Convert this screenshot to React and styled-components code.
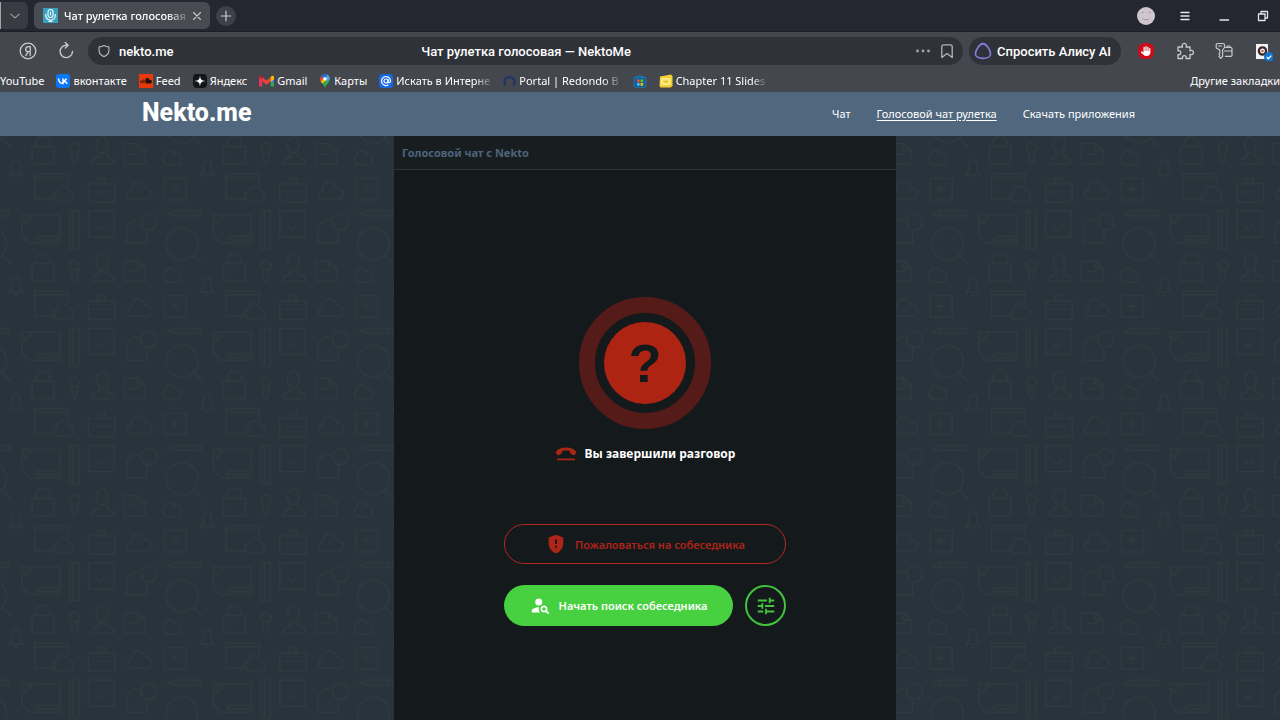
import React, { useState } from "react";
import styled, { createGlobalStyle, css } from "styled-components";
import { FaSoundcloud, FaHand } from "react-icons/fa6";
import { MdGppMaybe, MdPersonSearch, MdTune } from "react-icons/md";

const GlobalStyle = createGlobalStyle`
  * {
    box-sizing: border-box;
  }

  body {
    margin: 0;
    background: #29333b;
    color: #fff;
    font-family: "Noto Sans", "Open Sans", sans-serif;
    overflow-x: hidden;
  }

  button, input {
    font-family: inherit;
    color: inherit;
    padding: 0;
    border: none;
    background: none;
  }

  a {
    color: inherit;
    text-decoration: none;
  }

  svg {
    display: block;
    flex-shrink: 0;
  }
`;

/* ---------- browser icons ---------- */

const Line = ({ size = 20, children, width = 1.4, color = "#c9cacf" }) => (
  <svg width={size} height={size} viewBox="0 0 20 20" fill="none" stroke={color}
    strokeWidth={width} strokeLinecap="round" strokeLinejoin="round">
    {children}
  </svg>
);

const YandexIcon = () => (
  <Line width={1.3}>
    <circle cx="10" cy="10" r="7.8" />
    <path d="M12.2 14.6V5.6h-1.5c-1.9 0-3 1-3 2.6 0 1.5 1 2.5 2.6 2.5h1.9M10 10.8l-2.2 3.8" />
  </Line>
);

const ReloadIcon = () => (
  <Line>
    <path d="M10.5 4.2A6.2 6.2 0 1 0 16.5 10.5M9.3 1.5l2.8 2.7-2.8 2.8" />
  </Line>
);

const ShieldIcon = () => (
  <Line size={14} width={1.7} color="#b5b6bc">
    <path d="M10 2.2c2.3 1.5 4.6 2 7 2v5c0 4.2-2.6 7-7 8.800-4.400-1.800-7-4.600-7-8.800v-5c2.400 0 4.700-.5 7-2z" />
  </Line>
);

const BookmarkIcon = () => (
  <Line size={16} width={1.6} color="#b5b6bc">
    <path d="M3.5 18V4.5a2.2 2.2 0 0 1 2.2-2.2h8.600a2.200 2.200 0 0 1 2.200 2.200V18L10 13z" />
  </Line>
);

const AliceIcon = () => (
  <Line size={18} width={1.7} color="#8b7be0">
    <path d="M10 1.800c4 0 8.400 7.700 8.400 11.400 0 3-3.600 5-8.400 5s-8.400-2-8.400-5C1.600 9.500 6 1.800 10 1.800z" />
  </Line>
);

const PuzzleIcon = () => (
  <Line width={1.3}>
    <path d="M3 6h4.600c-.9-1.700-.2-3.700 1.700-3.700S11.900 4.300 11 6h4v3.800c1.700-.8 3.500-.1 3.500 1.700s-1.800 2.600-3.500 1.700V17.500h-4c.6-1.600-.2-2.900-1.700-2.900s-2.300 1.300-1.700 2.900H3v-3.900c1.700.5 2.800-.4 2.800-1.900S4.700 9.300 3 9.900z" />
  </Line>
);

const KeysIcon = () => (
  <Line width={1.2}>
    <path d="M3.500 2.500h5.400a1.600 1.600 0 0 1 1.600 1.600v2.400L8.600 9v6.300l-1.900 2-1.600-1.700.7-1.300-.8-1.300.8-1.200V9L2.200 7V4.100c0-.9.4-1.600 1.300-1.600zM4.600 5h3" />
    <path d="M11.500 6.500h5.500a1 1 0 0 1 1 1v6.800a1 1 0 0 1-1 1h-5.600M10.500 10H18M13 6.500V5h3v1.500" />
  </Line>
);

const ScreenIcon = () => (
  <svg width="20" height="20" viewBox="0 0 20 20">
    <path d="M3 3h12v15H3z" fill="#f3f3f3" />
    <circle cx="9.500" cy="10" r="3.600" fill="#fff" stroke="#3b2b31" strokeWidth="2.400" />
    <circle cx="9.500" cy="10" r="1.200" fill="#c2502b" />
    <circle cx="16" cy="16" r="5" fill="#1274d1" />
    <path d="M13.700 16l1.700 1.700 2.900-3.100" fill="none" stroke="#fff" strokeWidth="1.300" />
  </svg>
);

const AvatarFace = () => (
  <svg width="20" height="20" viewBox="0 0 20 20">
    <circle cx="10" cy="10" r="9" fill="#cfc6cf" />
    <path d="M5.500 7l2-1M12.500 6l2 1" stroke="#b592a5" strokeWidth="1.200" />
    <path d="M6 11.500c2 2.500 6 2.500 8 0-1 3.500-7 3.500-8 0z" fill="#8793a0" />
  </svg>
);

const MicIcon = () => (
  <svg width="15" height="15" viewBox="0 0 15 15">
    <path d="M0 0h15v15H0z" fill="#3a9fbd" />
    <rect x="5" y="1.500" width="5" height="8" rx="2.500" fill="none" stroke="#e8f8fb" strokeWidth="1.200" />
    <path d="M2.800 6v1.400a4.700 4.700 0 0 0 9.400 0V6M7.500 12v2M5.500 13.500h4M7.500 3.500v4" fill="none" stroke="#e8f8fb" strokeWidth="1.200" />
  </svg>
);

/* ---------- bookmark icons ---------- */

const VkIcon = () => (
  <svg width="14" height="14" viewBox="0 0 14 14">
    <rect width="14" height="14" rx="3" fill="#0b77f5" />
    <path d="M2.500 4.500c.3 3.200 1.800 5 4.500 5v-5M7 7c1.800-.2 3-1 3.500-2.500M7 7c2.200.2 3.500 1 4.300 2.600" fill="none" stroke="#fff" strokeWidth="1.500" />
  </svg>
);

const StarIcon = () => (
  <svg width="14" height="14" viewBox="0 0 14 14">
    <rect width="14" height="14" rx="4" fill="#15161a" />
    <path d="M7 1.500c.4 4 1.500 5.100 5.500 5.500-4 .4-5.100 1.500-5.500 5.500C6.600 8.500 5.500 7.400 1.500 7c4-.4 5.100-1.500 5.500-5.500z" fill="#fff" />
  </svg>
);

const GmailIcon = () => (
  <svg width="15" height="14" viewBox="0 0 15 14">
    <path d="M15 4v7.500c0 .6-.4 1-1 1h-2.300V5.500z" fill="#34a853" />
    <path d="M0 2.800v2.700l3.300 2.300V3.600L2.400 2C1.300 1.200 0 1.700 0 2.800z" fill="#c5221f" />
    <path d="M0 4.500h3.300v8H1.200c-.7 0-1.200-.5-1.200-1z" fill="#e0355c" />
    <path d="M3.300 3.300l4.200 3.200 4.200-3.200v4.200l-4.200 3.200-4.200-3.200z" fill="#ea4335" />
    <path d="M11.700 6.500L15 4.500v4h-3.300z" fill="#3f7de0" />
    <path d="M15 2.800v2.700l-3.300 2.300V3.300l1-1.200c1-.8 2.300-.4 2.300.7z" fill="#fbbc04" />
  </svg>
);

const MapsIcon = () => (
  <svg width="12" height="14" viewBox="1 0 12 14">
    <path d="M7 14C6.400 11 2.200 9 2.200 4.800L7 5l4.800-.2C11.800 9 7.600 11 7 14z" fill="#34a853" />
    <path d="M3.300 2A4.800 4.800 0 0 0 2.800 7.500L7 4.800z" fill="#ea4335" />
    <path d="M3.300 2A4.800 4.800 0 0 1 8.500.3L6 5.500z" fill="#1a73e8" />
    <path d="M8.500.3a4.800 4.800 0 0 1 3.300 4.500L8 8z" fill="#4fa3f5" />
    <path d="M2.800 7.500l1.500 2 4-3.500-2-2z" fill="#fbbc04" />
    <circle cx="7" cy="4.800" r="1.700" fill="#fff" />
  </svg>
);

const MailIcon = () => (
  <svg width="14" height="14" viewBox="0 0 14 14" fill="none" stroke="#fff" strokeWidth="1.200">
    <rect width="14" height="14" rx="3.500" fill="#1668e3" stroke="none" />
    <circle cx="7" cy="7" r="2" />
    <path d="M9 5v2.600c0 1.700 2.500 1.500 2.500-.6A4.500 4.500 0 1 0 9.500 10.800" />
  </svg>
);

const PortalIcon = () => (
  <svg width="14" height="14" viewBox="0 0 14 14">
    <path d="M3.500 11.500C1.500 8 3 3 7.500 3s6 4.500 4 8.500" fill="none" stroke="#24355f" strokeWidth="2.400" />
  </svg>
);

const StoreIcon = () => (
  <svg width="14" height="14" viewBox="0 0 14 14">
    <path d="M3.500 3.500V2h7v1.500M1 3.500h12V12c0 .8-.5 1.300-1.300 1.300H2.300C1.500 13.300 1 12.800 1 12z" fill="#0f609c" stroke="#2088b8" strokeWidth=".6" />
    <path d="M4 5.500h2.700v2.700H4z" fill="#f25022" />
    <path d="M7.500 5.500h2.700v2.700H7.500z" fill="#7fba00" />
    <path d="M4 9h2.700v2.700H4z" fill="#4cc2f1" />
    <path d="M7.500 9h2.700v2.700H7.500z" fill="#ffb900" />
  </svg>
);

const SlidesIcon = () => (
  <svg width="14" height="14" viewBox="0 0 14 14">
    <path d="M1 2.500L12 .5l1.500 1.500v10L11.500 13.500H1.500L.5 12z" fill="#f2cf2e" />
    <rect x="2.500" y="4.500" width="8.500" height="6" rx="1" fill="#fbe36a" stroke="#fdf3a6" />
    <path d="M4.500 7.500h4.500" stroke="#e0b51c" strokeWidth="1.300" />
  </svg>
);

const SoundcloudTile = styled.span`
  display: flex;
  align-items: center;
  justify-content: center;
  width: 14px;
  height: 14px;
  background: #e8390c;
  color: #20110d;
  font-size: 12px;
`;

const BOOKMARKS = [
  { title: "вконтакте", icon: <VkIcon /> },
  { title: "Feed", icon: <SoundcloudTile><FaSoundcloud /></SoundcloudTile> },
  { title: "Яндекс", icon: <StarIcon /> },
  { title: "Gmail", icon: <GmailIcon /> },
  { title: "Карты", icon: <MapsIcon /> },
  { title: "Искать в Интерне", icon: <MailIcon />, fade: true },
  { title: "Portal | Redondo B", icon: <PortalIcon />, fade: true },
  { title: "", label: "Microsoft Store", icon: <StoreIcon /> },
  { title: "Chapter 11 Slides", icon: <SlidesIcon />, fade: true },
];

const Browser = () => (
  <header>
    <TabStrip>
      <TabListButton aria-label="Список вкладок">
        <Line size={12} width={1.8} color="#a4a5ab"><path d="M3 7l7 6 7-6" /></Line>
      </TabListButton>
      <Tab>
        <MicIcon />
        <TabTitle>Чат рулетка голосовая</TabTitle>
        <PlainButton aria-label="Закрыть вкладку">
          <Line size={10} width={2.2}><path d="M3 3l14 14M17 3L3 17" /></Line>
        </PlainButton>
      </Tab>
      <NewTab aria-label="Новая вкладка">
        <Line size={12} width={2}><path d="M10 2v16M2 10h16" /></Line>
      </NewTab>
      <IconRow>
        <PlainButton aria-label="Профиль"><AvatarFace /></PlainButton>
        <PlainButton aria-label="Меню">
          <Line width={1.4} color="#e6e6e8"><path d="M6 6.500h8M6 10h8M6 13.500h8" /></Line>
        </PlainButton>
        <PlainButton aria-label="Свернуть">
          <Line width={1.4} color="#e6e6e8"><path d="M6 14h8.500" /></Line>
        </PlainButton>
        <PlainButton aria-label="Восстановить">
          <Line width={1.3} color="#e6e6e8"><path d="M5.500 8h6.500v6.500H5.500zM8 8V5.500h6.500V12H12" /></Line>
        </PlainButton>
      </IconRow>
    </TabStrip>
    <Toolbar>
      <NavButtons>
        <PlainButton aria-label="Яндекс"><YandexIcon /></PlainButton>
        <PlainButton aria-label="Обновить"><ReloadIcon /></PlainButton>
      </NavButtons>
      <AddressBar>
        <AddressSide>
          <ShieldIcon />
          <AddressInput aria-label="Адрес" defaultValue="nekto.me" />
        </AddressSide>
        <span>Чат рулетка голосовая — NektoMe</span>
        <AddressSide $end>
          <PlainButton aria-label="Ещё">
            <svg width="16" height="16" viewBox="0 0 16 16" fill="#a4a5ab">
              <circle cx="2.500" cy="8" r="1.400" /><circle cx="8" cy="8" r="1.400" /><circle cx="13.500" cy="8" r="1.400" />
            </svg>
          </PlainButton>
          <PlainButton aria-label="В закладки"><BookmarkIcon /></PlainButton>
        </AddressSide>
      </AddressBar>
      <AliceButton><AliceIcon />Спросить Алису AI</AliceButton>
      <IconRow>
        <PlainButton aria-label="Блокировщик"><StopSign><FaHand /></StopSign></PlainButton>
        <PlainButton aria-label="Расширения"><PuzzleIcon /></PlainButton>
        <PlainButton aria-label="Пароли"><KeysIcon /></PlainButton>
        <PlainButton aria-label="Запись экрана"><ScreenIcon /></PlainButton>
      </IconRow>
    </Toolbar>
    <Bookmarks>
      <Bookmark href="#">YouTube</Bookmark>
      {BOOKMARKS.map((item, index) => (
        <Bookmark href="#" key={index} aria-label={item.label} $iconOnly={!item.title}>
          {item.icon}
          {item.title && <BookmarkTitle $fade={item.fade}>{item.title}</BookmarkTitle>}
        </Bookmark>
      ))}
      <OtherBookmarks href="#">Другие закладки</OtherBookmarks>
    </Bookmarks>
  </header>
);

/* ---------- page wallpaper ---------- */

const TILE_W = 191.4;
const TILE_H = 117.3;

const Wallpaper = () => (
  <WallpaperSvg aria-hidden="true">
    <defs>
      <g id="doodles" fill="none" stroke="#2d3c40" strokeWidth="1.200" strokeLinejoin="round">
        <path d="M32 10.500h22V28H32zM36 10V7a7 7 0 0 1 14 0v3" />
        <path d="M72 20c0-4-2.500-5-2.500-8a5 5 0 0 1 10 0c0 3-2.500 4-2.500 8v5l-2.500 3-2.500-3zM70 16h9" />
        <ellipse cx="102" cy="9" rx="6" ry="8" />
        <path d="M99 17v4l-7 3v4h22v-4l-7-3v-4" />
        <path d="M124.500 7.500H138l7.500 7V28h-21zM138 7.500v7h7M129 18h10" />
        <path d="M165 28a5 5 0 0 1 0-8c0-6 8-7 10-2 5 0 7 3 6 7 0 3-2 4-4 4h-9z" />
        <path d="M9 39l3-4v-5c0-8 8-8 8 0v5l3 4zM14 42h4" />
        <path d="M55 63H34.500V38H68v12M34.500 41.500H68" />
        <path d="M57 65.500c-5-2-5-8 0-9 0-8 10-8 11-2 6 0 7 9 2 11z" />
        <path d="M88.500 47.500H115V66H88.500zM98 47v-5h7v5M92 56h5M99 56h4M106 56h5" />
        <path d="M131 63c-5-1-5-8 0-8 0-11 12-13 14-3 8 0 9 10 3 11z" />
        <path d="M164.500 42.500h22V64h-22zM175 49v8M171 53h8" />
        <path d="M167 78l7-3h27v5h-27zM174 75v5M197 75v5" />
        <path d="M22 79h38v28H29l-7-8zM22 83l4 4 6-8M36 103l3-3h18v4H36z" />
        <path d="M69.500 75h9.500v38h-9.500zM73 75v38" />
        <path d="M88.500 75H114v26H88.500zM97 91l3 3 5-5" />
        <path d="M141 84h-8l-6.500 7v16H147V95" />
        <circle cx="149" cy="86" r="8" />
        <circle cx="182" cy="108" r="16" />
        <path d="M193 119l9 9" />
      </g>
      <pattern id="wallpaper" width={TILE_W} height={TILE_H} patternUnits="userSpaceOnUse">
        <use href="#doodles" />
        <use href="#doodles" x={-TILE_W} />
        <use href="#doodles" y={-TILE_H} />
        <use href="#doodles" x={-TILE_W} y={-TILE_H} />
      </pattern>
    </defs>
    <rect width="100%" height="100%" fill="url(#wallpaper)" />
  </WallpaperSvg>
);

const HangUpIcon = () => (
  <svg width="22" height="16" viewBox="0 0 22 16" fill="#a92717">
    <path d="M11 1.500C6.500 1.500 3 3 1.200 5.300c-.8 1-.2 2.300.8 3.200 1 .8 1.600.8 2.600.2l1.900-1.200c.7-.5.6-1 .6-2.400 2.400-.8 5.400-.8 7.800 0 0 1.400-.1 1.900.6 2.400l1.900 1.200c1 .6 1.600.6 2.600-.2 1-.9 1.600-2.200.8-3.200C19 3 15.500 1.500 11 1.500z" />
    <path d="M2 12.500h18v1.800H2z" />
  </svg>
);

const App = () => {
  const [searching, setSearching] = useState(false);

  return (
    <Page>
      <GlobalStyle />
      <Browser />
      <SiteHeader>
        <Logo href="#">Nekto.me</Logo>
        <SiteNav>
          <NavLink href="#">Чат</NavLink>
          <NavLink href="#" $active>Голосовой чат рулетка</NavLink>
          <NavLink href="#">Скачать приложения</NavLink>
        </SiteNav>
      </SiteHeader>
      <Main>
        <Wallpaper />
        <Panel>
          <PanelTitle>Голосовой чат с Nekto</PanelTitle>
          <Content>
            <Ring>
              <Face>?</Face>
            </Ring>
            <Status>
              <HangUpIcon />
              Вы завершили разговор
            </Status>
            <Actions>
              <ReportButton>
                <MdGppMaybe size={22} />
                Пожаловаться на собеседника
              </ReportButton>
              <ActionRow>
                <SearchButton onClick={() => setSearching(!searching)} aria-pressed={searching}>
                  <MdPersonSearch size={21} />
                  Начать поиск собеседника
                </SearchButton>
                <SettingsButton aria-label="Настройки">
                  <MdTune size={22} />
                </SettingsButton>
              </ActionRow>
            </Actions>
          </Content>
        </Panel>
      </Main>
    </Page>
  );
};

const fadeRight = css`
  mask-image: linear-gradient(to right, #000 84%, transparent 104%);
`;

const Page = styled.div`
  display: flex;
  flex-direction: column;
  min-height: 100vh;
`;

const TabStrip = styled.div`
  display: flex;
  align-items: center;
  height: 32px;
  background: #242630;
  border-bottom: 1px solid #1d1e25;
`;

const TabListButton = styled.button`
  display: flex;
  align-items: center;
  justify-content: center;
  width: 28px;
  height: 27px;
  background: #3a3b42;
  border-left: 1px solid #a4a5ab;
  border-radius: 0 6px 6px 0;
`;

const Tab = styled.div`
  display: flex;
  align-items: center;
  gap: 6px;
  width: 176px;
  height: 27px;
  margin-left: 6px;
  padding: 0 9px;
  background: #494b53;
  border-radius: 6px;
`;

const TabTitle = styled.span`
  flex: 1;
  white-space: nowrap;
  font-size: 11px;
  font-weight: 500;
  ${fadeRight}
`;

const PlainButton = styled.button`
  display: flex;
  align-items: center;
  justify-content: center;
`;

const NewTab = styled(PlainButton)`
  width: 20px;
  height: 20px;
  margin-left: 6px;
  border-radius: 50%;
  background: #3e4047;
`;

const IconRow = styled.div`
  display: flex;
  align-items: center;
  gap: 19px;
  margin-left: auto;
  padding-right: 7px;
`;

const Toolbar = styled.div`
  display: flex;
  align-items: center;
  padding-top: 5px;
  background: #45474f;
`;

const NavButtons = styled.div`
  display: flex;
  gap: 18px;
  padding: 0 12px 0 18px;
`;

const AddressBar = styled.div`
  display: flex;
  align-items: center;
  flex: 1;
  height: 28px;
  padding: 0 8px 0 9px;
  border-radius: 14px;
  background: #30323a;
  font-family: "Roboto", "Noto Sans", sans-serif;
  font-size: 13px;
  font-weight: 500;
  white-space: nowrap;
`;

const AddressSide = styled.div`
  display: flex;
  align-items: center;
  flex: 1;
  gap: 8px;
  justify-content: ${(props) => (props.$end ? "flex-end" : "flex-start")};
`;

const AddressInput = styled.input`
  width: 160px;
  font-size: 13px;
  font-weight: 500;
`;

const AliceButton = styled.button`
  display: flex;
  align-items: center;
  gap: 5px;
  height: 28px;
  margin: 0 15px 0 6px;
  padding: 0 10px 0 5px;
  border-radius: 14px;
  background: #30323a;
  font-family: "Roboto", "Noto Sans", sans-serif;
  font-size: 13px;
  font-weight: 500;
  white-space: nowrap;
`;

const StopSign = styled.span`
  display: flex;
  align-items: center;
  justify-content: center;
  width: 16px;
  height: 16px;
  margin: 2px;
  border-radius: 6px;
  background: #c70d1c;
  font-size: 10px;
`;

const Bookmarks = styled.nav`
  display: flex;
  align-items: center;
  gap: 12px;
  height: 27px;
  padding-top: 4px;
  background: #45474f;
  overflow: hidden;
`;

const Bookmark = styled.a`
  display: flex;
  align-items: center;
  flex-shrink: 0;
  gap: 3px;
  margin-left: ${(props) => (props.$iconOnly ? 2 : 0)}px;
  font-size: 11px;
  white-space: nowrap;
`;

const BookmarkTitle = styled.span`
  ${(props) => props.$fade && fadeRight}
`;

const OtherBookmarks = styled(Bookmark)`
  margin-left: auto;
`;

const SiteHeader = styled.header`
  display: flex;
  align-items: center;
  justify-content: space-between;
  height: 44px;
  padding: 0 145px 0 142px;
  background: #51677e;
  flex-shrink: 0;
`;

const Logo = styled.a`
  padding-bottom: 2px;
  font-family: "Roboto", "Noto Sans", sans-serif;
  font-size: 25px;
  font-weight: 800;
  line-height: 28px;
`;

const SiteNav = styled.nav`
  display: flex;
  gap: 26px;
  padding-bottom: 2px;
`;

const NavLink = styled.a`
  font-size: 11px;
  text-decoration: ${(props) => (props.$active ? "underline" : "none")};
  text-underline-offset: 2px;
`;

const Main = styled.main`
  position: relative;
  flex: 1;
  display: flex;
  justify-content: center;
  padding-left: 10px;
`;

const WallpaperSvg = styled.svg`
  position: absolute;
  inset: 0;
  width: 100%;
  height: 100%;
`;

const Panel = styled.section`
  position: relative;
  display: flex;
  flex-direction: column;
  width: 502px;
  background: #14191b;
`;

const PanelTitle = styled.h1`
  margin: 0;
  padding: 0 8px;
  border-bottom: 1px solid #2c3336;
  background: #181e20;
  color: #4d647c;
  font-size: 11px;
  font-weight: 700;
  line-height: 33px;
`;

const Content = styled.div`
  display: flex;
  flex-direction: column;
  align-items: center;
  padding: 127px 0 92px;
`;

const Ring = styled.div`
  display: flex;
  align-items: center;
  justify-content: center;
  width: 132px;
  height: 132px;
  border: 16px solid #551b19;
  border-radius: 50%;
`;

const Face = styled.div`
  width: 82px;
  height: 82px;
  border-radius: 50%;
  background: #ae2413;
  color: #14191b;
  font-family: "Liberation Sans", Arial, sans-serif;
  font-size: 54px;
  font-weight: 700;
  line-height: 82px;
  text-align: center;
`;

const Status = styled.p`
  display: flex;
  align-items: center;
  gap: 8px;
  margin: 15px 0 60px;
  font-size: 12px;
  font-weight: 700;
  line-height: 20px;
`;

const Actions = styled.div`
  width: 282px;
`;

const ActionRow = styled.div`
  display: flex;
  gap: 12px;
  margin-top: 21px;
`;

const RoundButton = styled.button`
  display: flex;
  align-items: center;
  justify-content: center;
  gap: 8px;
  height: 41px;
  border-radius: 21px;
  font-size: 11px;
  font-weight: 600;
  cursor: pointer;
`;

const ReportButton = styled(RoundButton)`
  width: 100%;
  height: 40px;
  border: 1px solid #b32824;
  color: #ae2419;
`;

const SearchButton = styled(RoundButton)`
  flex: 1;
  background: #47d040;
  color: #fff;
`;

const SettingsButton = styled(RoundButton)`
  width: 41px;
  border: 2px solid #43c43f;
  color: #43c43f;
`;

export default App;
